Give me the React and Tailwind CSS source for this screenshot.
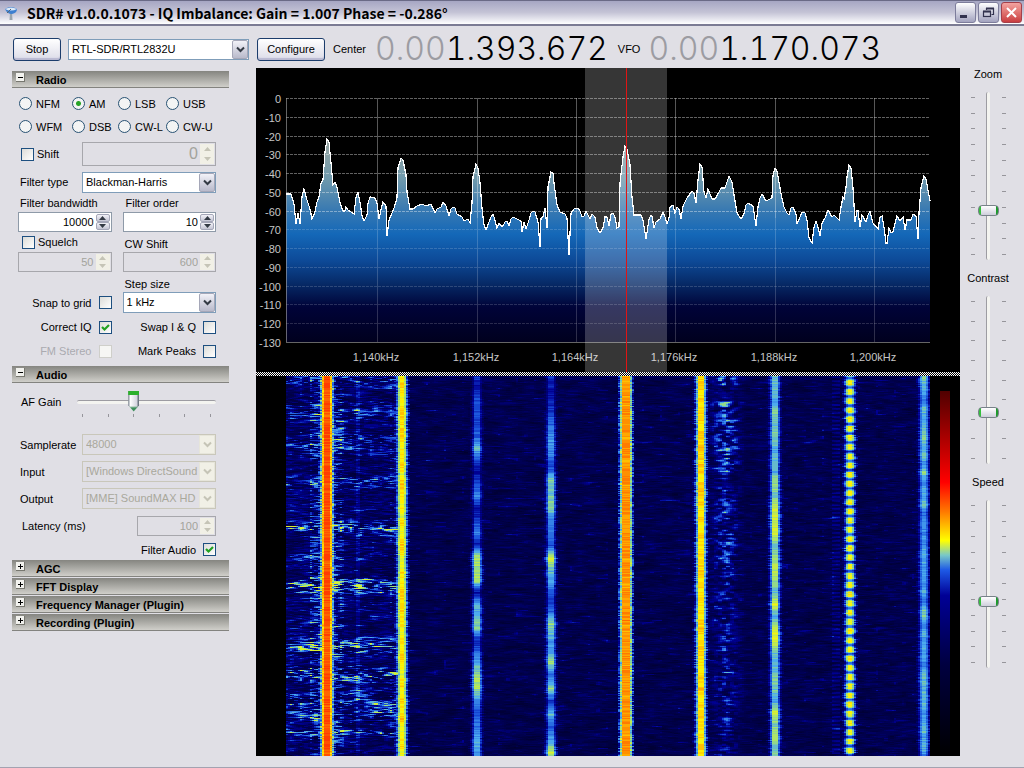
// src/App.jsx
import React, { useMemo, useState } from "react";
import clsx from "clsx";

const PLOT_LEFT = 30;
const PLOT_RIGHT = 674;

const DB_LABELS = [0, -10, -20, -30, -40, -50, -60, -70, -80, -90, -100, -110, -120, -130];

const FREQ_LABELS = [
  { x: 121, text: "1,140kHz" },
  { x: 221, text: "1,152kHz" },
  { x: 320, text: "1,164kHz" },
  { x: 419, text: "1,176kHz" },
  { x: 519, text: "1,188kHz" },
  { x: 618, text: "1,200kHz" },
];

const TRACE =
  "30,126 35,126 38,136 40,156 42,145 44,156 46,129 48,121 51,132 54,141 56,151 59,144 61,134 63,129 65,115 67,112 69,84 71,71 73,74 75,95 77,117 79,114 81,119 84,135 87,143 89,143 90,139 92,142 98,146 100,129 102,124 104,134 106,148 108,153 111,147 112,135 114,129 119,130 121,135 123,151 125,142 127,134 130,138 131,168 133,152 136,145 138,140 141,130 142,100 145,90 147,92 150,107 151,124 154,141 157,141 161,138 166,136 170,138 175,136 179,145 181,141 185,139 187,134 190,138 193,148 195,141 197,139 199,140 201,146 206,149 208,153 212,151 214,155 216,135 217,109 220,96 222,100 224,115 226,140 228,157 230,162 233,154 235,149 237,146 239,152 241,160 243,155 245,158 247,158 249,154 251,153 253,158 255,151 257,149 263,152 265,153 266,164 268,154 270,161 273,152 275,145 277,143 279,144 282,154 284,179 285,150 287,149 289,140 291,160 292,119 295,104 297,105 298,115 301,137 304,144 309,146 311,150 313,187 315,145 318,141 322,140 324,143 326,149 328,148 330,143 334,151 336,146 339,149 341,160 344,165 347,160 349,149 351,149 353,158 355,146 357,145 359,149 361,160 363,159 364,115 367,89 369,78 371,81 374,97 376,129 378,147 385,147 387,152 390,171 393,151 395,147 396,148 398,160 400,154 404,151 407,144 409,149 411,156 413,150 414,139 417,137 419,145 421,139 423,141 425,151 427,138 431,130 436,123 438,125 440,135 442,112 444,96 446,99 448,124 450,130 452,121 454,126 456,131 459,131 463,124 465,120 469,120 473,108 476,114 478,127 481,145 485,151 488,146 490,137 492,135 497,138 500,158 502,139 504,130 506,126 510,133 516,130 517,107 519,100 521,103 524,120 526,130 528,139 531,145 533,147 535,140 537,139 540,146 541,156 544,149 546,144 549,145 551,152 553,170 556,175 558,159 560,153 562,159 564,168 566,155 569,150 572,142 576,149 578,147 583,152 585,139 587,129 588,131 590,119 591,109 593,97 595,100 597,120 599,154 601,143 602,143 604,159 606,147 610,154 612,147 614,143 617,155 622,161 624,149 626,148 628,159 630,175 631,175 633,160 635,165 637,164 641,148 644,153 647,149 649,162 651,152 655,152 657,146 660,148 662,171 663,145 665,120 668,108 670,111 672,122 674,133";

function Spectrum() {
  const dbY = (db) => Math.round(30 - db * 1.877) + 0.5;

  return (
    <svg viewBox="0 0 704 304" className="block w-full h-auto bg-black" role="img" aria-label="Spectrum">
      <defs>
        <linearGradient id="fill" gradientUnits="userSpaceOnUse" x1="0" y1="70" x2="0" y2="274">
          <stop offset="0" stopColor="#9aa5a0" />
          <stop offset="0.2" stopColor="#6f99ac" />
          <stop offset="0.36" stopColor="#3678b2" />
          <stop offset="0.47" stopColor="#1468b8" />
          <stop offset="0.6" stopColor="#0d4a98" />
          <stop offset="0.72" stopColor="#062864" />
          <stop offset="0.83" stopColor="#000338" />
          <stop offset="1" stopColor="#00001e" />
        </linearGradient>
      </defs>

      <polygon points={`30,274 ${TRACE} 674,274`} fill="url(#fill)" />

      <g stroke="#fff" strokeOpacity="0.34" shapeRendering="crispEdges">
        {DB_LABELS.slice(0, -1).map((db) => (
          <line key={db} x1={PLOT_LEFT} x2={PLOT_RIGHT} y1={dbY(db)} y2={dbY(db)} strokeDasharray="3 1" strokeOpacity={db < -60 ? 0.16 : 0.38} />
        ))}
        {FREQ_LABELS.map((f) => (
          <g key={f.x}>
            <line x1={f.x + 0.5} x2={f.x + 0.5} y1="30" y2="150" />
            <line x1={f.x + 0.5} x2={f.x + 0.5} y1="150" y2="274" strokeOpacity="0.18" />
          </g>
        ))}
      </g>
      <path d="M30.5 30V274.5H674" fill="none" stroke="#a9a9a9" strokeOpacity="0.6" shapeRendering="crispEdges" />
      <polyline points={TRACE} fill="none" stroke="#fff" strokeWidth="1.2" shapeRendering="crispEdges" />

      <g fill="#c6c6c6" className="font-['Liberation_Sans',Arial,sans-serif] text-[11px]">
        {DB_LABELS.map((db) => (
          <text key={db} x="25" y={dbY(db) + 4} textAnchor="end">
            {db}
          </text>
        ))}
        {FREQ_LABELS.map((f) => (
          <text key={f.x} x={f.x - 1} y="293" textAnchor="middle">
            {f.text}
          </text>
        ))}
      </g>

      <rect x="329" y="0" width="82" height="304" fill="#fff" fillOpacity="0.21" />
      <rect x="370" y="0" width="1" height="304" fill="#e01414" />
    </svg>
  );
}

// position, strength, half width of the carrier, fade depth, fade length in rows
const STATIONS = [
  { x: 71, level: 0.98, core: 3, fade: 0.04, length: 6 },
  { x: 146, level: 0.81, core: 2, fade: 0.1, length: 7 },
  { x: 221, level: 0.66, core: 2, fade: 0.36, length: 12 },
  { x: 295, level: 0.7, core: 2, fade: 0.4, length: 13 },
  { x: 370, level: 0.89, core: 3, fade: 0.04, length: 5 },
  { x: 445, level: 0.82, core: 2, fade: 0.08, length: 4 },
  { x: 519, level: 0.72, core: 2, fade: 0.2, length: 12 },
  { x: 594, level: 0.75, core: 2, fade: 0.38, pulse: 9.2 },
  { x: 668, level: 0.61, core: 2, fade: 0.16, length: 8 },
];

// rows in which the strong station splatters over its neighbours
const BURSTS = [
  { y: 4, size: 8, gain: 0.34 },
  { y: 35, size: 16, gain: 0.28 },
  { y: 68, size: 18, gain: 0.28 },
  { y: 106, size: 10, gain: 0.34 },
  { y: 152, size: 10, gain: 0.4 },
  { y: 180, size: 6, gain: 0.26 },
  { y: 209, size: 10, gain: 0.46 },
  { y: 270, size: 12, gain: 0.42 },
  { y: 298, size: 10, gain: 0.44 },
  { y: 330, size: 22, gain: 0.36 },
  { y: 356, size: 6, gain: 0.36 },
];

const PALETTE = [
  [0, 0, 0, 44],
  [0.15, 0, 0, 84],
  [0.3, 0, 0, 150],
  [0.42, 24, 80, 220],
  [0.54, 76, 170, 240],
  [0.64, 160, 225, 120],
  [0.75, 255, 250, 0],
  [0.88, 255, 140, 0],
  [1, 255, 50, 0],
];

const LEVELS = 36;

function toColor(v) {
  const i = Math.max(1, PALETTE.findIndex((p) => p[0] >= v));
  const a = PALETTE[i - 1];
  const b = PALETTE[i];
  const t = (v - a[0]) / (b[0] - a[0]);
  const mix = [1, 2, 3].map((c) => Math.round(a[c] + (b[c] - a[c]) * t));
  return `rgb(${mix.join(",")})`;
}

function hash(x, y) {
  let h = (Math.imul(x, 374761393) + Math.imul(y, 668265263)) | 0;
  h = Math.imul(h ^ (h >>> 13), 1274126177);
  return ((h ^ (h >>> 16)) >>> 0) / 4294967296;
}

function smooth(pos, row) {
  const i = Math.floor(pos);
  const f = pos - i;
  return hash(i, row) * (1 - f) + hash(i + 1, row) * f;
}

// streaks that are wide along the frequency axis and short in time
function streak(x, y, width, height, seed) {
  const row = Math.floor(y / height);
  const f = y / height - row;
  return smooth(x / width, row + seed) * (1 - f) + smooth(x / width, row + 1 + seed) * f;
}

function strength(x, y) {
  let v = 0.12 * streak(x, y, 6, 1, 0) + 0.12 * streak(x, y, 12, 3, 900);
  v += Math.max(0, streak(x, y, 9, 2, 4000) - 0.8) * 0.9;

  if (x < 142) {
    let gain = 0.14;
    for (const b of BURSTS) {
      const d = (y - b.y) / b.size;
      gain = Math.max(gain, b.gain * Math.exp(-d * d));
    }
    const near = Math.abs(x - 71) < 18 ? 0.12 : 0;
    const n = streak(x, y, 5, 1, 2000) * 0.75 + streak(x, y, 15, 3, 3000) * 0.5;
    v += Math.max(0, n - 0.48) * (gain + near) * 2.5;
    if (Math.abs(x - 102) < 3) v += 0.1;
    v = Math.min(0.7, v);
  }

  const side = Math.abs(x - 470);
  if (side < 20) {
    const busy = y < 10 || (y > 24 && y < 96) || y > 110 ? 1 : 0.4;
    const fadeOut = y > 190 ? 0.55 : y > 100 ? 0.75 : 1;
    v += Math.max(0, streak(x, y, 4, 2, 7000) - 0.25) * (1 - side / 20) * 0.95 * busy * fadeOut;
    v = Math.min(0.62, v);
  }
  if (Math.abs(x - 580) < 4 && y % 4 < 2) v += 0.12;

  STATIONS.forEach((s, n) => {
    const d = Math.abs(x - s.x);
    if (d > 8) return;
    const wave = s.pulse
      ? Math.max(0, -Math.cos(((y + 3) / s.pulse) * 2 * Math.PI)) * (0.7 + 0.3 * hash(n, Math.floor(y / 9)))
      : smooth(y / s.length, n + 50);
    const jitter = (hash(n, y) - 0.5) * 0.07;
    const spill = (hash(x > s.x ? 1 : 2, y + n * 500) - 0.5) * 0.1;
    const edge = d <= s.core ? 1 : 1 - (d - s.core) * (0.15 + spill);
    v = Math.max(v, (s.level - s.fade * wave + jitter) * edge);
  });

  return Math.min(0.999, v);
}

function buildWaterfall() {
  const paths = Array.from({ length: LEVELS }, () => []);
  for (let y = 0; y < 380; y++) {
    let start = PLOT_LEFT;
    let current = -1;
    for (let x = PLOT_LEFT; x <= PLOT_RIGHT; x += 2) {
      const level = x < PLOT_RIGHT ? Math.floor(strength(x + 1, y) * LEVELS) : -1;
      if (level !== current) {
        if (current >= 0) paths[current].push(`M${start} ${y}h${x - start}v1H${start}`);
        start = x;
        current = level;
      }
    }
  }
  return paths.map((p) => p.join(""));
}

function Waterfall() {
  const paths = useMemo(buildWaterfall, []);

  return (
    <svg viewBox="0 0 704 380" className="block w-full h-auto bg-black" role="img" aria-label="Waterfall">
      <defs>
        <linearGradient id="scale" x1="0" y1="0" x2="0" y2="1">
          <stop offset="0" stopColor="#500000" />
          <stop offset="0.25" stopColor="#ff0000" />
          <stop offset="0.33" stopColor="#ff7800" />
          <stop offset="0.41" stopColor="#ffff00" />
          <stop offset="0.45" stopColor="#78c8c8" />
          <stop offset="0.49" stopColor="#1e5ae6" />
          <stop offset="0.56" stopColor="#000096" />
          <stop offset="0.75" stopColor="#000040" />
          <stop offset="1" stopColor="#000000" />
        </linearGradient>
      </defs>
      <g shapeRendering="crispEdges">
        {paths.map((d, i) => (
          <path key={i} d={d} fill={toColor((i + 0.5) / LEVELS)} />
        ))}
      </g>
      <rect x="684" y="15" width="10" height="365" fill="url(#scale)" />
    </svg>
  );
}

function Chevron({ disabled }) {
  return (
    <span
      className={clsx(
        "pointer-events-none absolute right-px top-px bottom-px flex w-4 items-center justify-center border",
        disabled ? "border-[#e6e5da] bg-[#f1f0e6]" : "rounded-xs border-[#a5a7b8] bg-linear-to-b from-[#f2f2f8] to-[#b9bacb]"
      )}
    >
      <svg width="9" height="7" viewBox="0 0 9 7">
        <path d="M1 1.5L4.5 5L8 1.5" fill="none" stroke={disabled ? "#c5c4b6" : "#333a44"} strokeWidth="2" />
      </svg>
    </span>
  );
}

function Select({ id, label, value, disabled, className }) {
  return (
    <span className={clsx("relative block h-[21px]", className)}>
      <select
        id={id}
        aria-label={label}
        disabled={disabled}
        defaultValue={value}
        className={clsx(
          "h-full w-full appearance-none overflow-hidden border pl-[3px] pr-4 leading-none",
          disabled ? "border-[#c9c7ba] bg-[#e0dfe5] text-[#a9a89c] opacity-100" : "border-[#7f9db9] bg-white text-black"
        )}
      >
        <option>{value}</option>
      </select>
      <Chevron disabled={disabled} />
    </span>
  );
}

function Spinner({ id, label, value, disabled, className, inputClassName }) {
  const [number, setNumber] = useState(value);
  const arrow = disabled ? "#c5c4b6" : "#333a44";
  const button = clsx(
    "flex flex-1 w-3.5 items-center justify-center border",
    disabled ? "border-[#f1f0e6] bg-[#f1f0e6]" : "rounded-xs border-[#a5a7b8] bg-linear-to-b from-[#f2f2f8] to-[#c4c5d3]"
  );

  return (
    <span
      className={clsx(
        "flex border p-px",
        disabled ? "border-[#a7a7ac] bg-[#e0dfe5]" : "border-[#8e9aa8] bg-white",
        className
      )}
    >
      <input
        id={id}
        aria-label={label}
        type="text"
        inputMode="numeric"
        disabled={disabled}
        value={number}
        onChange={(e) => setNumber(Number(e.target.value) || 0)}
        className={clsx("min-w-0 flex-1 bg-transparent pr-0.5 text-right leading-none", disabled && "text-[#a3a39c]", inputClassName)}
      />
      <span className="flex flex-col">
        <button type="button" aria-label="Increase" disabled={disabled} className={button} onClick={() => setNumber(number + 1)}>
          <svg width="7" height="4" viewBox="0 0 7 4"><path d="M0 4L3.5 0L7 4z" fill={arrow} /></svg>
        </button>
        <button type="button" aria-label="Decrease" disabled={disabled} className={button} onClick={() => setNumber(number - 1)}>
          <svg width="7" height="4" viewBox="0 0 7 4"><path d="M0 0L3.5 4L7 0z" fill={arrow} /></svg>
        </button>
      </span>
    </span>
  );
}

function CheckBox({ label, checked = false, disabled, before }) {
  const [on, setOn] = useState(checked);

  return (
    <label className={clsx("flex items-center", before ? "justify-end gap-[7px]" : "gap-[3px]", disabled && "text-[#aaaab0]")}>
      {before && label}
      <span className="relative block size-[13px]">
        <input
          type="checkbox"
          checked={on}
          disabled={disabled}
          onChange={() => setOn(!on)}
          className={clsx(
            "block size-full appearance-none border",
            disabled ? "border-[#cfcfca] bg-[#f6f6f4]" : "border-[#1d4f80] bg-linear-to-br from-[#dcdcd8] to-white"
          )}
        />
        {on && (
          <svg viewBox="0 0 13 13" className="pointer-events-none absolute inset-0">
            <path d="M3 6L5.5 8.5L10 4" fill="none" stroke="#21a121" strokeWidth="2.2" />
          </svg>
        )}
      </span>
      {!before && label}
    </label>
  );
}

function Panel({ title, open: initial = false, children }) {
  const [open, setOpen] = useState(initial);

  return (
    <section>
      <h2 className="mb-px">
        <button
          type="button"
          aria-expanded={open}
          onClick={() => setOpen(!open)}
          className="flex h-[17px] w-full items-center border-b border-[#83837f] bg-linear-to-b from-[#858580] to-[#d0cfca] pl-1 text-left font-bold text-black"
        >
          <svg width="9" height="9" viewBox="0 0 9 9" className="mb-1 mr-[11px]" shapeRendering="crispEdges">
            <rect width="9" height="9" fill="#77776f" />
            <rect width="8" height="8" fill="#f2f2ee" />
            <path d={open ? "M2 4.5H7" : "M2 4.5H7M4.5 2V7"} stroke="#000" />
          </svg>
          <span className="pt-0.5">{title}</span>
        </button>
      </h2>
      {open && children}
    </section>
  );
}

const MODES = ["NFM", "AM", "LSB", "USB", "WFM", "DSB", "CW-L", "CW-U"];

function RadioPanel() {
  const [mode, setMode] = useState("AM");

  return (
    <Panel title="Radio" open>
      <div className="pb-[5px] pl-1.5 pr-[13px] pt-[3px]">
        <div className="grid grid-cols-[53px_46px_48px_auto] pl-px">
          {MODES.map((m) => (
            <label key={m} className="flex h-[23px] items-center gap-1 whitespace-nowrap">
              <input
                type="radio"
                name="mode"
                checked={mode === m}
                onChange={() => setMode(m)}
                className="size-[13px] shrink-0 appearance-none rounded-full border border-[#285273] bg-[#f3f4f4] checked:bg-[radial-gradient(circle,#27a327_0_2px,#f3f4f4_3px)]"
              />
              {m}
            </label>
          ))}
        </div>

        <div className="flex h-8 items-center justify-between pl-[3px]">
          <CheckBox label="Shift" />
          <Spinner label="Shift frequency" value={0} disabled className="h-6 w-[134px]" inputClassName="text-base" />
        </div>
        <div className="flex h-6 items-center justify-between pl-0.5">
          <label htmlFor="filter-type">Filter type</label>
          <Select id="filter-type" value="Blackman-Harris" className="w-[134px]" />
        </div>

        <div className="grid grid-cols-2 gap-x-[11px] whitespace-nowrap">
          <label htmlFor="bandwidth" className="h-[18px] pl-0.5 leading-[18px]">Filter bandwidth</label>
          <label htmlFor="order" className="h-[18px] pl-[3px] leading-[18px]">Filter order</label>
          <Spinner id="bandwidth" value={10000} className="h-5" />
          <Spinner id="order" value={10} className="h-5" />

          <div className="flex h-5 items-center pl-1"><CheckBox label="Squelch" /></div>
          <label htmlFor="cw-shift" className="h-5 pl-0.5 leading-6">CW Shift</label>
          <Spinner label="Squelch level" value={50} disabled className="h-5" />
          <Spinner id="cw-shift" value={600} disabled className="h-5" />

          <label htmlFor="step-size" className="col-start-2 h-5 pl-0.5 leading-6">Step size</label>
          <CheckBox label="Snap to grid" before />
          <Select id="step-size" value="1 kHz" />

          <div className="flex h-7 items-center justify-end"><CheckBox label="Correct IQ" checked before /></div>
          <div className="flex h-7 items-center justify-end"><CheckBox label="Swap I & Q" before /></div>
          <div className="flex h-5 items-center justify-end"><CheckBox label="FM Stereo" disabled before /></div>
          <div className="flex h-5 items-center justify-end"><CheckBox label="Mark Peaks" before /></div>
        </div>
      </div>
    </Panel>
  );
}

function AudioPanel() {
  const [gain, setGain] = useState(40);
  const row = "flex h-[27px] items-center justify-between";

  return (
    <Panel title="Audio" open>
      <div className="pl-2 pr-[13px]">
        <div className="flex h-[47px] items-start justify-between pl-px pt-[7px]">
          <label htmlFor="af-gain" className="pt-[3px]">AF Gain</label>
          <div className="w-[139px]">
            <input
              id="af-gain"
              type="range"
              value={gain}
              onChange={(e) => setGain(Number(e.target.value))}
              className="block h-[21px] w-full appearance-none bg-transparent [&::-webkit-slider-runnable-track]:h-1 [&::-webkit-slider-runnable-track]:rounded-sm [&::-webkit-slider-runnable-track]:border-t [&::-webkit-slider-runnable-track]:border-[#9d9ca2] [&::-webkit-slider-runnable-track]:bg-[#f4f4f0] [&::-webkit-slider-thumb]:-mt-2.5 [&::-webkit-slider-thumb]:h-[21px] [&::-webkit-slider-thumb]:w-[11px] [&::-webkit-slider-thumb]:appearance-none [&::-webkit-slider-thumb]:bg-[linear-gradient(#2cb02c_0_4px,transparent_4px_15px,#3f8f5c_17px),linear-gradient(90deg,#8a929c_0_1px,#fff_2px,#d4d4de_9px,#6c7680_10px)] [&::-webkit-slider-thumb]:[clip-path:polygon(0_0,100%_0,100%_70%,50%_100%,0_70%)]"
            />
            <div className="mt-0.5 flex justify-between px-[5px]">
              {[0, 1, 2, 3, 4, 5].map((n) => (
                <span key={n} className="h-[3px] w-px bg-[#96959b]" />
              ))}
            </div>
          </div>
        </div>
        <div className={row}>
          <label htmlFor="samplerate">Samplerate</label>
          <Select id="samplerate" value="48000" disabled className="w-[134px]" />
        </div>
        <div className={row}>
          <label htmlFor="input">Input</label>
          <Select id="input" value="[Windows DirectSound" disabled className="w-[134px]" />
        </div>
        <div className={row}>
          <label htmlFor="output">Output</label>
          <Select id="output" value="[MME] SoundMAX HD" disabled className="w-[134px]" />
        </div>
        <div className={row}>
          <label htmlFor="latency" className="pl-0.5">Latency (ms)</label>
          <Spinner id="latency" value={100} disabled className="h-5 w-[79px]" />
        </div>
        <div className="flex h-[21px] items-center justify-end">
          <CheckBox label="Filter Audio" checked before />
        </div>
      </div>
    </Panel>
  );
}

function VerticalSlider({ id, label, value: initial, ticks }) {
  const [value, setValue] = useState(initial);
  const marks = (
    <div className="flex flex-col justify-between py-[5px]">
      {Array.from({ length: ticks }, (_, n) => (
        <span key={n} className="h-px w-1 bg-[#96959b]" />
      ))}
    </div>
  );

  return (
    <div className="flex h-[204px] flex-col items-center">
      <label htmlFor={id} className="mb-3 leading-3">{label}</label>
      <div className="flex h-[168px] justify-center gap-[3px]">
        {marks}
        <input
          id={id}
          type="range"
          value={value}
          onChange={(e) => setValue(Number(e.target.value))}
          className="h-full w-[21px] appearance-none bg-transparent [direction:rtl] [writing-mode:vertical-lr] [&::-webkit-slider-runnable-track]:w-1 [&::-webkit-slider-runnable-track]:rounded-sm [&::-webkit-slider-runnable-track]:border-l [&::-webkit-slider-runnable-track]:border-[#9d9ca2] [&::-webkit-slider-runnable-track]:bg-[#f4f4f0] [&::-webkit-slider-thumb]:-ml-[9px] [&::-webkit-slider-thumb]:h-[11px] [&::-webkit-slider-thumb]:w-[21px] [&::-webkit-slider-thumb]:appearance-none [&::-webkit-slider-thumb]:rounded-sm [&::-webkit-slider-thumb]:border [&::-webkit-slider-thumb]:border-[#788289] [&::-webkit-slider-thumb]:bg-[linear-gradient(90deg,#34c03c_0_2px,transparent_2px_17px,#1d9a2c_17px),linear-gradient(#fff,#cfcfdb)]"
        />
        {marks}
      </div>
    </div>
  );
}

function Frequency({ dim, digits }) {
  return (
    <output className="font-['Inter',sans-serif] text-[32px] font-light leading-8 tabular-nums text-black">
      <span className="text-[#9c9ca2]">{dim}</span>
      {digits}
    </output>
  );
}

function TitleBar() {
  const button = "flex h-[21px] w-[21px] items-center justify-center rounded-[3px] border";

  return (
    <header className="flex h-[26px] items-center border-b-2 border-t border-b-[#7b7b93] border-t-[#6a6a86] bg-linear-to-b from-[#a6a6c3] via-[#c5c4d6] to-white pl-[3px] pr-0.5">
      <svg width="16" height="16" viewBox="0 0 16 16" className="mr-2">
        <path d="M7 8L9 8L9.5 15H6.5z" fill="#98a4ae" />
        <path d="M2 4Q8 0 14 4Q14 8 9 9Q4 9 2 4z" fill="#3d7fd0" />
        <path d="M2 4Q8 1 14 4Q8 7 2 4z" fill="#dceaf8" />
        <path d="M4 8L8 4" stroke="#5c6670" />
      </svg>
      <h1 className="flex-1 font-['Noto_Sans_CJK_JP',sans-serif] text-sm font-bold leading-4">
        SDR# v1.0.0.1073 - IQ Imbalance: Gain = 1.007 Phase = -0.286°
      </h1>
      <div className="flex gap-0.5">
        <button type="button" aria-label="Minimize" className={clsx(button, "border-[#7d7d9b] bg-linear-to-b from-white to-[#a3a3bf]")}>
          <svg width="15" height="15" viewBox="0 0 15 15"><path d="M2 11.5H9" stroke="#32324e" strokeWidth="3" /></svg>
        </button>
        <button type="button" aria-label="Restore" className={clsx(button, "border-[#7d7d9b] bg-linear-to-b from-white to-[#a3a3bf]")}>
          <svg width="15" height="15" viewBox="0 0 15 15" fill="none" stroke="#32324e">
            <path d="M5.5 5V3.5H12.5V9.5H10.5" strokeWidth="1.2" />
            <path d="M5 3.5H13" strokeWidth="2" />
            <rect x="2.5" y="6.5" width="7" height="5" strokeWidth="1.2" />
            <path d="M2 6.5H10" strokeWidth="2" />
          </svg>
        </button>
        <button type="button" aria-label="Close" className={clsx(button, "border-[#a4404a] bg-linear-to-b from-[#f3a3a0] to-[#c93c40]")}>
          <svg width="15" height="15" viewBox="0 0 15 15"><path d="M3 3L12 12M12 3L3 12" stroke="#fff" strokeWidth="2" /></svg>
        </button>
      </div>
    </header>
  );
}

export default function App() {
  const [running, setRunning] = useState(true);
  const button = "h-[23px] rounded-[3px] border border-[#1c3d6c] bg-linear-to-b from-white to-[#dcdce8] shadow-[inset_0_-2px_1px_#b9b9d2]";

  return (
    <div className="flex min-h-screen flex-col border-b border-[#a3a2b0] bg-[#e0dfe5] font-['Liberation_Sans',Arial,sans-serif] text-[11px] leading-4 text-black">
      <TitleBar />

      <div className="flex h-[42px] items-center pl-[13px] pt-1">
        <button type="button" onClick={() => setRunning(!running)} className={clsx(button, "w-12")}>
          {running ? "Stop" : "Play"}
        </button>
        <Select label="Source" value="RTL-SDR/RTL2832U" className="ml-[7px] w-[181px]" />
        <button type="button" className={clsx(button, "ml-2 w-[68px]")}>Configure</button>
        <span className="ml-2 mr-[7px] w-[35px]">Center</span>
        <Frequency dim="0.00" digits="1.393.672" />
        <span className="ml-2.5 mr-2">VFO</span>
        <Frequency dim="0.00" digits="1.170.073" />
      </div>

      <div className="flex flex-1 items-start pb-2.5 pl-3 pr-2">
        <aside className="mr-[27px] w-[217px] shrink-0 pt-[3px]">
          <RadioPanel />
          <AudioPanel />
          <Panel title="AGC" />
          <Panel title="FFT Display" />
          <Panel title="Frequency Manager (Plugin)" />
          <Panel title="Recording (Plugin)" />
        </aside>

        <main className="min-w-0 flex-1">
          <Spectrum />
          <div className="h-1 bg-white bg-[repeating-conic-gradient(#000_0_25%,#fff_0_50%)] bg-size-[2px_2px]" />
          <Waterfall />
        </main>

        <aside className="w-14 shrink-0">
          <VerticalSlider id="zoom" label="Zoom" value={28} ticks={11} />
          <VerticalSlider id="contrast" label="Contrast" value={29} ticks={9} />
          <VerticalSlider id="speed" label="Speed" value={39} ticks={11} />
        </aside>
      </div>
    </div>
  );
}
